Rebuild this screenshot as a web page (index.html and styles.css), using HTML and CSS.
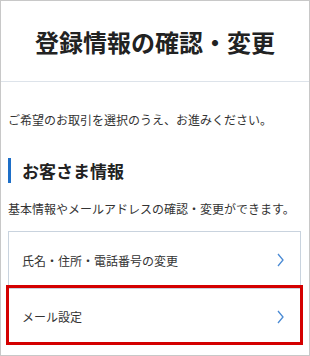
FILE: index.html
```html
<!DOCTYPE html>
<html lang="ja">
<head>
<meta charset="utf-8">
<link rel="stylesheet" href="styles.css">
</head>
<body>
<div class="page">
  <header class="header">
    <h1 class="title">登録情報の確認・変更</h1>
  </header>
  <main class="content">
    <p class="intro">ご希望のお取引を選択のうえ、お進みください。</p>
    <h2 class="section-title">お客さま情報</h2>
    <p class="desc">基本情報やメールアドレスの確認・変更ができます。</p>
    <ul class="menu">
      <li class="menu-item">
        <span class="menu-label">氏名・住所・電話番号の変更</span>
        <svg class="chevron" width="7" height="14" viewBox="0 0 7 14"><path d="M1 1 L6 7 L1 13" fill="none" stroke="#4a8ad4" stroke-width="1.3"/></svg>
      </li>
      <li class="menu-item highlighted">
        <span class="menu-label">メール設定</span>
        <svg class="chevron" width="7" height="14" viewBox="0 0 7 14"><path d="M1 1 L6 7 L1 13" fill="none" stroke="#4a8ad4" stroke-width="1.3"/></svg>
      </li>
    </ul>
  </main>
</div>
</body>
</html>
```

FILE: styles.css
```css
* { box-sizing: border-box; }
html, body { margin: 0; padding: 0; background: #fff; }
body {
  font-family: "Noto Sans CJK JP", "Noto Sans", sans-serif;
  color: #333;
}
.page {
  width: 310px;
  height: 356px;
  border: 1px solid #c8c8c8;
  overflow: hidden;
}
.header {
  height: 81px;
  border-bottom: 1px solid #dde3ea;
  display: flex;
  align-items: center;
  justify-content: center;
}
.title {
  margin: 0;
  font-size: 24px;
  font-weight: 700;
  color: #222;
  line-height: 1;
  padding-top: 1px;
}
.content {
  padding: 0 7px;
}
.intro {
  margin: 29px 0 0;
  font-size: 12px;
  line-height: 18px;
}
.section-title {
  margin: 29px 0 0;
  font-size: 17px;
  font-weight: 700;
  color: #222;
  line-height: 25px;
  border-left: 3px solid #1e6fc8;
  padding-left: 11px;
}
.desc {
  margin: 17px 0 0;
  font-size: 12px;
  line-height: 18px;
}
.menu {
  list-style: none;
  margin: 13px 0 0;
  padding: 0;
  border: 1px solid #c9d3de;
  width: 293px;
}
.menu-item {
  position: relative;
  height: 56px;
  display: flex;
  align-items: center;
  justify-content: space-between;
  padding: 0 16px 0 13px;
  font-size: 12px;
}
.menu-item + .menu-item {
  border-top: 1px solid #c9d3de;
}
.highlighted::after {
  content: "";
  position: absolute;
  left: -3px;
  right: -3px;
  top: -4px;
  bottom: -1px;
  border: 3px solid #d40000;
}
.chevron { display: block; }
```
